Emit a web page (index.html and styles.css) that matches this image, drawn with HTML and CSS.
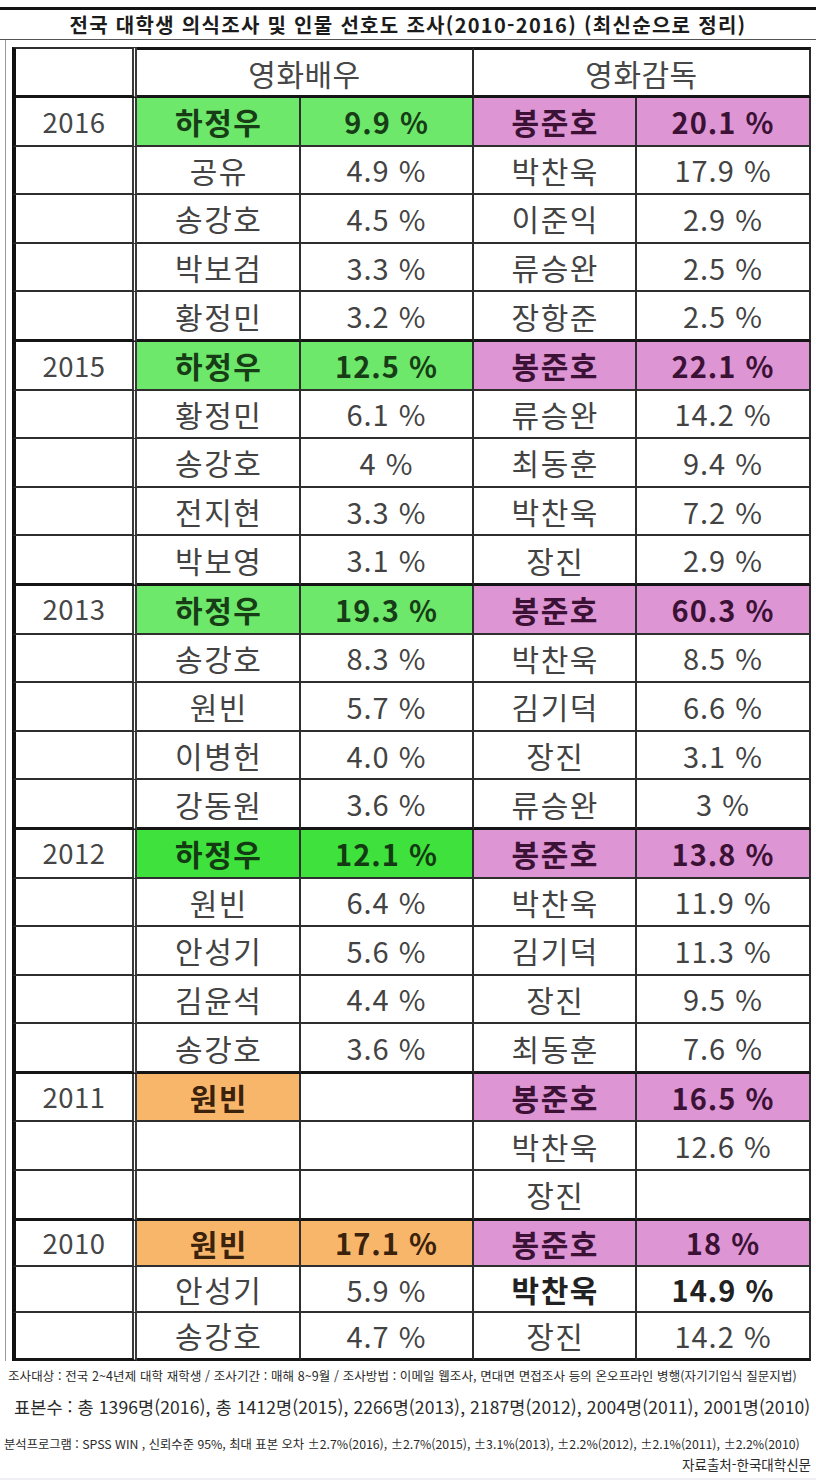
FILE: index.html
```html
<!DOCTYPE html>
<html lang="ko">
<head>
<meta charset="utf-8">
<title>전국 대학생 의식조사 및 인물 선호도 조사</title>
<link rel="stylesheet" href="styles.css">
</head>
<body>
<div class="page">
  <div class="title">전국 대학생 의식조사 및 인물 선호도 조사(2010-2016) (최신순으로 정리)</div>
  <div class="table-wrap">
    <table class="survey">
      <colgroup>
        <col class="c-year"><col class="c-name"><col class="c-pct"><col class="c-name2"><col class="c-pct2">
      </colgroup>
      <thead>
        <tr class="head">
          <th class="year"></th>
          <th colspan="2" class="sep">영화배우</th>
          <th colspan="2" class="sep">영화감독</th>
        </tr>
      </thead>
      <tbody>
        <tr class="first"><td class="year">2016</td><td class="nm g b">하정우</td><td class="g b">9.9 %</td><td class="nm p b">봉준호</td><td class="p b">20.1 %</td></tr>
        <tr><td class="year"></td><td class="nm">공유</td><td>4.9 %</td><td class="nm">박찬욱</td><td>17.9 %</td></tr>
        <tr><td class="year"></td><td class="nm">송강호</td><td>4.5 %</td><td class="nm">이준익</td><td>2.9 %</td></tr>
        <tr><td class="year"></td><td class="nm">박보검</td><td>3.3 %</td><td class="nm">류승완</td><td>2.5 %</td></tr>
        <tr class="last"><td class="year"></td><td class="nm">황정민</td><td>3.2 %</td><td class="nm">장항준</td><td>2.5 %</td></tr>

        <tr><td class="year">2015</td><td class="nm g b">하정우</td><td class="g b">12.5 %</td><td class="nm p b">봉준호</td><td class="p b">22.1 %</td></tr>
        <tr><td class="year"></td><td class="nm">황정민</td><td>6.1 %</td><td class="nm">류승완</td><td>14.2 %</td></tr>
        <tr><td class="year"></td><td class="nm">송강호</td><td>4 %</td><td class="nm">최동훈</td><td>9.4 %</td></tr>
        <tr><td class="year"></td><td class="nm">전지현</td><td>3.3 %</td><td class="nm">박찬욱</td><td>7.2 %</td></tr>
        <tr class="last"><td class="year"></td><td class="nm">박보영</td><td>3.1 %</td><td class="nm">장진</td><td>2.9 %</td></tr>

        <tr><td class="year">2013</td><td class="nm g b">하정우</td><td class="g b">19.3 %</td><td class="nm p b">봉준호</td><td class="p b">60.3 %</td></tr>
        <tr><td class="year"></td><td class="nm">송강호</td><td>8.3 %</td><td class="nm">박찬욱</td><td>8.5 %</td></tr>
        <tr><td class="year"></td><td class="nm">원빈</td><td>5.7 %</td><td class="nm">김기덕</td><td>6.6 %</td></tr>
        <tr><td class="year"></td><td class="nm">이병헌</td><td>4.0 %</td><td class="nm">장진</td><td>3.1 %</td></tr>
        <tr class="last"><td class="year"></td><td class="nm">강동원</td><td>3.6 %</td><td class="nm">류승완</td><td>3 %</td></tr>

        <tr><td class="year">2012</td><td class="nm g2 b">하정우</td><td class="g2 b">12.1 %</td><td class="nm p b">봉준호</td><td class="p b">13.8 %</td></tr>
        <tr><td class="year"></td><td class="nm">원빈</td><td>6.4 %</td><td class="nm">박찬욱</td><td>11.9 %</td></tr>
        <tr><td class="year"></td><td class="nm">안성기</td><td>5.6 %</td><td class="nm">김기덕</td><td>11.3 %</td></tr>
        <tr><td class="year"></td><td class="nm">김윤석</td><td>4.4 %</td><td class="nm">장진</td><td>9.5 %</td></tr>
        <tr class="last"><td class="year"></td><td class="nm">송강호</td><td>3.6 %</td><td class="nm">최동훈</td><td>7.6 %</td></tr>

        <tr><td class="year">2011</td><td class="nm o b">원빈</td><td></td><td class="nm p b">봉준호</td><td class="p b">16.5 %</td></tr>
        <tr><td class="year"></td><td></td><td></td><td class="nm">박찬욱</td><td>12.6 %</td></tr>
        <tr class="last"><td class="year"></td><td></td><td></td><td class="nm">장진</td><td></td></tr>

        <tr class="short"><td class="year">2010</td><td class="nm o b">원빈</td><td class="o b">17.1 %</td><td class="nm p b">봉준호</td><td class="p b">18 %</td></tr>
        <tr class="short"><td class="year"></td><td class="nm">안성기</td><td>5.9 %</td><td class="nm bk">박찬욱</td><td class="bk">14.9 %</td></tr>
        <tr class="short last"><td class="year"></td><td class="nm">송강호</td><td>4.7 %</td><td class="nm">장진</td><td>14.2 %</td></tr>
      </tbody>
    </table>
  </div>
  <div class="notes">
    <p class="n1">조사대상 : 전국 2~4년제 대학 재학생 / 조사기간 : 매해 8~9월 / 조사방법 : 이메일 웹조사, 면대면 면접조사 등의 온오프라인 병행(자기기입식 질문지법)</p>
    <p class="n2">표본수 : 총 1396명(2016), 총 1412명(2015), 2266명(2013), 2187명(2012), 2004명(2011), 2001명(2010)</p>
    <p class="n3">분석프로그램 : SPSS WIN , 신뢰수준 95%, 최대 표본 오차 ±2.7%(2016), ±2.7%(2015), ±3.1%(2013), ±2.2%(2012), ±2.1%(2011), ±2.2%(2010)</p>
    <p class="n4">자료출처-한국대학신문</p>
  </div>
  <div class="bottom-band"></div>
</div>
</body>
</html>
```

FILE: styles.css
```css
html, body {
  margin: 0;
  padding: 0;
  background: #ffffff;
}

.page {
  width: 816px;
  font-family: "Noto Sans CJK KR", "Noto Sans", sans-serif;
  color: #3f3f3f;
  padding-top: 7px;
}

.title {
  border-top: 3px solid #141414;
  border-bottom: 1px solid #555;
  height: 29px;
  line-height: 29px;
  text-align: center;
  font-size: 20px;
  font-weight: 700;
  color: #1c1c1c;
  letter-spacing: 1.3px;
  white-space: nowrap;
}

.table-wrap {
  margin-left: 5px;
  border-left: 1px solid #9a9a9a;
  padding-left: 6px;
  padding-top: 7px;
  width: 799px;
}

.survey {
  border-collapse: separate;
  border-spacing: 0;
  table-layout: fixed;
  width: 799px;
}

.c-year { width: 125px; }
.c-name { width: 164px; }
.c-pct { width: 173px; }
.c-name2 { width: 163px; }
.c-pct2 { width: 174px; }

.survey th,
.survey td {
  padding: 0;
  text-align: center;
  vertical-align: middle;
  border-right: 2px solid #2e2e2e;
  border-bottom: 2px solid #2e2e2e;
  white-space: nowrap;
  overflow: hidden;
}

.survey tr.head th {
  height: 45px;
  border-top: 3px solid #151515;
  border-bottom: 3px solid #151515;
  font-size: 30px;
  font-weight: 400;
  color: #474747;
  letter-spacing: 0.5px;
  line-height: 1;
}

.survey tr.head th.year {
  border-top: 2px solid #2e2e2e;
}

.survey td {
  height: 46.6px;
  font-size: 29px;
  line-height: 1;
  color: #434343;
  letter-spacing: 1px;
}

.survey td.nm {
  font-size: 30px;
  letter-spacing: 1.5px;
  padding-left: 1.5px;
}

.survey tr.short td {
  height: 44.3px;
}

.survey .year,
.survey tr.head th.year {
  border-left: 4px solid #111;
  border-right: 5px double #3a3a3a;
  font-size: 27.5px;
  letter-spacing: 0.5px;
  color: #464646;
}

.survey tr.last td {
  border-bottom: 3px solid #151515;
}

.survey td.b {
  font-weight: 700;
}

.survey td.g {
  background: #6ee86a;
  color: #173d17;
}

.survey td.g2 {
  background: #3fe23c;
  color: #133a13;
}

.survey td.p {
  background: #dd95d3;
  color: #3b1236;
}

.survey td.o {
  background: #f8b66b;
  color: #3a220c;
}

.survey td.bk {
  font-weight: 700;
  color: #222;
}

.notes {
  padding-top: 7px;
}

.notes p {
  margin: 0;
  white-space: nowrap;
  color: #2a2a2a;
}

.n1 {
  font-size: 12.5px;
  line-height: 16px;
  padding-left: 8px;
  letter-spacing: 0.1px;
}

.n2 {
  font-size: 17.5px;
  line-height: 24px;
  padding-left: 14px;
  margin-top: 11px !important;
  letter-spacing: 0.1px;
}

.n3 {
  font-size: 12.3px;
  line-height: 16px;
  padding-left: 4px;
  margin-top: 17px !important;
  letter-spacing: 0px;
}

.n4 {
  font-size: 13.5px;
  line-height: 18px;
  margin-top: 3px !important;
  text-align: right;
  padding-right: 5px;
}

.bottom-band {
  margin-top: 5px;
  height: 10px;
  background: #eef0f4;
}
```
